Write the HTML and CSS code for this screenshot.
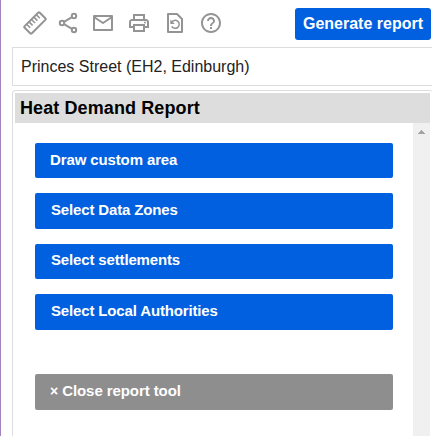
FILE: index.html
```
<!DOCTYPE html>
<html lang="en">
<head>
<meta charset="utf-8">
<title>Heat Demand Report</title>
<link rel="stylesheet" href="styles.css">
</head>
<body>
<main class="sidebar">
  <header class="toolbar">
    <nav class="tools">
      <svg class="ruler" viewBox="0 0 24 24"><g transform="rotate(-45 12 12)" fill="none" stroke="currentColor" stroke-width="2"><rect x="1.300" y="6.900" width="21.400" height="10.200" rx="1.200"/><path d="M5.200 7v5M8.600 7v5M12 7v5M15.400 7v5M18.800 7v5" stroke-width="1.600"/></g></svg>
      <svg viewBox="0 0 24 24"><g fill="none" stroke="currentColor" stroke-width="2"><circle cx="18" cy="5" r="2.200"/><circle cx="6" cy="12" r="2.200"/><circle cx="18" cy="19" r="2.200"/><path d="M8 10.800l8-4.700M8 13.200l8 4.700"/></g></svg>
      <svg class="mail" viewBox="0 0 24 24"><path fill="none" stroke="currentColor" stroke-width="2" stroke-linejoin="round" d="M3 5h18v14H3zM3 6l9 6 9-6"/></svg>
      <svg class="print" viewBox="0 0 24 24"><path fill="currentColor" d="M19 8h-1V3H6v5H5c-1.660 0-3 1.340-3 3v6h4v4h12v-4h4v-6c0-1.660-1.340-3-3-3zM8 5h8v3H8V5zm8 12v2H8v-4h8v2zm2-2v-2H6v2H4v-4c0-.55.45-1 1-1h14c.55 0 1 .45 1 1v4h-2z"/><circle cx="18" cy="11.500" r="1" fill="currentColor"/></svg>
      <svg class="restore" viewBox="0 0 24 24"><path fill="none" stroke="currentColor" stroke-width="2" stroke-linejoin="round" d="M5 3h9l5 5v13H5z"/><path fill="none" stroke="currentColor" stroke-width="1.500" d="M8.600 11.500a4 4 0 1 1 .1 3.800"/><path fill="currentColor" d="M7.300 8.500v4.500h4.500z"/></svg>
      <svg class="help" viewBox="0 0 24 24"><path fill="currentColor" d="M11 18h2v-2h-2v2zm1-16C6.480 2 2 6.480 2 12s4.480 10 10 10 10-4.480 10-10S17.520 2 12 2zm0 18c-4.410 0-8-3.590-8-8s3.590-8 8-8 8 3.590 8 8-3.590 8-8 8zm0-14c-2.210 0-4 1.790-4 4h2c0-1.100.9-2 2-2s2 .9 2 2c0 2-3 1.750-3 5h2c0-2.250 3-2.500 3-5 0-2.210-1.790-4-4-4z"/></svg>
    </nav>
    <button class="generate">Generate report</button>
  </header>
  <div class="location">Princes Street (EH2, Edinburgh)</div>
  <section class="panel">
    <h1 class="title">Heat Demand Report</h1>
    <div class="content">
      <div class="actions">
        <button class="action short first">Draw custom area</button>
        <button class="action">Select Data Zones</button>
        <button class="action short">Select settlements</button>
        <button class="action">Select Local Authorities</button>
        <button class="action close"><span class="cross">×</span> Close report tool</button>
      </div>
      <div class="scrollbar"><svg viewBox="0 0 7 4"><path fill="#a3a3a3" d="M3 0h1v1h1v1h1v1h1v1H0V3h1V2h1V1h1z"/></svg></div>
    </div>
  </section>
</main>
</body>
</html>
```
FILE: styles.css
```
* {
  box-sizing: border-box;
}

body {
  margin: 0;
  height: 436px;
  overflow: hidden;
  background: #fff;
  color: #000;
  font-family: "Liberation Sans", Arial, sans-serif;
}

button {
  border: 0;
  font-family: inherit;
  font-weight: bold;
  color: #fff;
  white-space: nowrap;
}

.sidebar {
  height: 436px;
  display: flex;
  flex-direction: column;
  padding-left: 11px;
  border-left: 1px solid #a382bd;
}

.toolbar {
  height: 47px;
  flex: none;
  display: flex;
  justify-content: space-between;
  padding: 8px 1px 0 10px;
}

.tools {
  display: flex;
  padding-top: 3px;
  color: #949494;
}

.tools svg {
  width: 24px;
  height: 24px;
  flex: none;
  margin-right: 10px;
}

.tools .ruler {
  margin-left: 0.5px;
  margin-right: 9.5px;
}

.tools .mail {
  margin-left: 1px;
  margin-right: 12px;
}

.tools .print {
  margin-right: 12px;
}

.tools .restore {
  margin-right: 12px;
}

.tools .help {
  margin-right: 0;
}

.generate {
  width: 136px;
  height: 32px;
  padding: 0 0 1px;
  border-radius: 3px;
  background: #0060e0;
  font-size: 16px;
}

.location {
  height: 39px;
  flex: none;
  padding-left: 8px;
  border: 1px solid #ddd;
  border-right: 0;
  color: #222;
  font-size: 16px;
  line-height: 37px;
}

.panel {
  flex: 1;
  display: flex;
  flex-direction: column;
  margin-top: 4px;
  padding: 2px 2px 0 2px;
  border: 1px solid #ddd;
  border-right-width: 0;
  border-bottom: 0;
  border-radius: 4px 2px 0 0;
}

.title {
  height: 30px;
  flex: none;
  margin: 0;
  padding-left: 5px;
  background: #ddd;
  font-size: 18px;
  letter-spacing: 0.1px;
  line-height: 30px;
}

.content {
  flex: 1;
  display: flex;
  justify-content: space-between;
}

.actions {
  width: 378px;
  display: flex;
  flex-direction: column;
  gap: 15px;
  padding: 20px 0 0 20px;
}

.action {
  height: 36px;
  flex: none;
  padding: 0 0 3px 16px;
  border-radius: 2px;
  background: #0060e0;
  font-size: 15px;
  letter-spacing: -0.15px;
  text-align: left;
}

.short {
  height: 35px;
  padding-bottom: 4px;
}

.first {
  padding-bottom: 2px;
  padding-left: 15px;
  letter-spacing: -0.12px;
}

.close {
  margin-top: 29px;
  padding-left: 15px;
  background: #8e8e8e;
  letter-spacing: -0.08px;
}

.cross {
  font-size: 14px;
}

.scrollbar {
  width: 17px;
  display: flex;
  justify-content: center;
  align-items: flex-start;
  padding-top: 7px;
  background: #f0f0f0;
}

.scrollbar svg {
  width: 7px;
  height: 4px;
}
```
